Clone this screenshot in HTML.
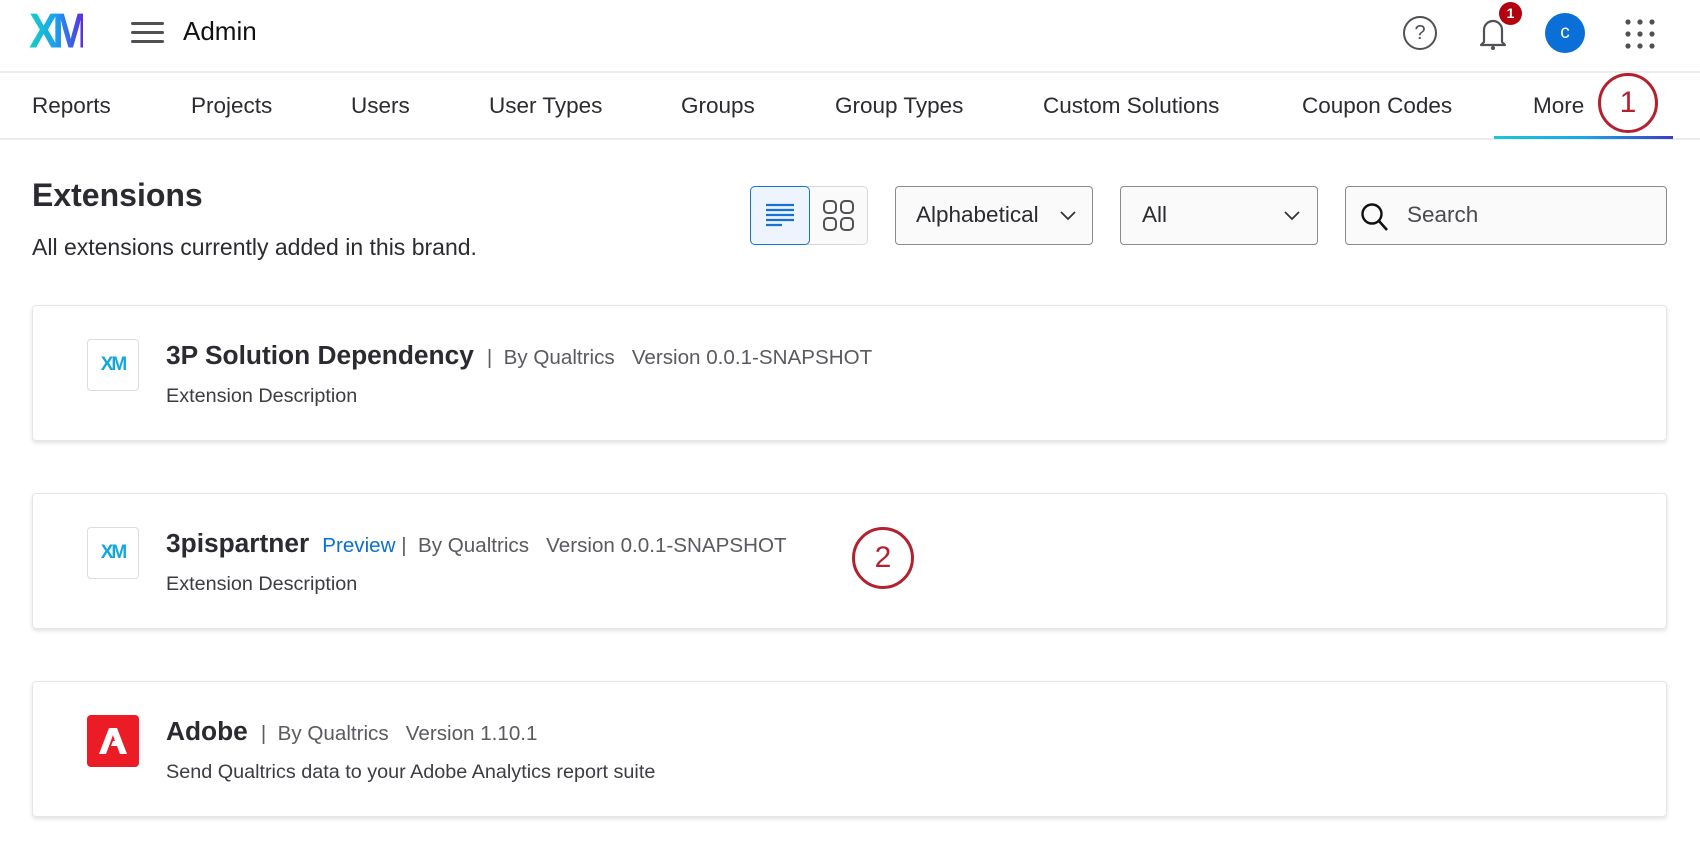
<!DOCTYPE html>
<html><head><meta charset="utf-8"><style>
*{margin:0;padding:0;box-sizing:border-box}
body{width:1700px;height:844px;background:#fff;font-family:"Liberation Sans",Arial,sans-serif;color:#1f1f24;position:relative;overflow:hidden}
.a{position:absolute;white-space:nowrap}
.nav{font-size:22.5px;color:#2b2b30;top:93px}
.card{position:absolute;left:32px;width:1635px;height:136px;background:#fff;border:1px solid #e6e6e8;border-radius:4px;box-shadow:0 2px 4px rgba(0,0,0,.12)}
.logo{position:absolute;left:54px;top:33px;width:52px;height:52px;border:1.5px solid #ddd;border-radius:4px;display:flex;align-items:center;justify-content:center;font-weight:bold;font-size:19px;letter-spacing:-2px;color:#14a6e0}
.t{position:absolute;left:133px;top:34px;font-size:26.3px;font-weight:bold;color:#2a2a30;white-space:nowrap}
.m{font-size:20.6px;font-weight:normal;color:#5a5a60}
.d{position:absolute;left:133px;top:79px;font-size:19.8px;color:#3c3c42;white-space:nowrap}
.box{position:absolute;top:186px;height:59px;border:1.5px solid #8a8a90;border-radius:4px;background:#fafafa;font-size:22.5px;color:#2b2b30}
.num{position:absolute;border:3.5px solid #b5202e;border-radius:50%;color:#b5202e;font-size:30px;display:flex;align-items:center;justify-content:center}
</style></head><body>
<div class="a" style="left:29px;top:4px;font-size:44px;font-weight:bold;letter-spacing:-6px;transform:scaleY(1.12);transform-origin:top left;background:linear-gradient(90deg,#13d3c0,#1a9ff0 50%,#5a2ee0);-webkit-background-clip:text;color:transparent">XM</div>
<div class="a" style="left:131px;top:22px;width:33px;height:3px;background:#505055;box-shadow:0 9px 0 #505055,0 18px 0 #505055;border-radius:2px"></div>
<div class="a" style="left:183px;top:16px;font-size:26px;color:#111">Admin</div>
<div class="a" style="left:1403px;top:16px;width:34px;height:34px;border:2px solid #505055;border-radius:50%;text-align:center;font-size:20px;line-height:30px;color:#505055">?</div>
<svg class="a" style="left:1476px;top:14px" width="34" height="38" viewBox="0 0 34 38"><path d="M8 28V16a9 9 0 0 1 18 0v12l3 3H5z" fill="none" stroke="#505055" stroke-width="2.2" stroke-linejoin="round"/><circle cx="17" cy="34" r="2" fill="#505055"/></svg>
<div class="a" style="left:1499px;top:2px;width:23px;height:23px;border-radius:50%;background:#b3000f;color:#fff;font-size:14px;font-weight:bold;text-align:center;line-height:23px">1</div>
<div class="a" style="left:1545px;top:13px;width:40px;height:40px;border-radius:50%;background:#0a6fd6;color:#fff;font-size:19px;text-align:center;line-height:40px">c</div>
<svg class="a" style="left:1624px;top:18px" width="32" height="32"><g fill="#505055"><circle cx="4" cy="4" r="2.6"/><circle cx="16" cy="4" r="2.6"/><circle cx="28" cy="4" r="2.6"/><circle cx="4" cy="16" r="2.6"/><circle cx="16" cy="16" r="2.6"/><circle cx="28" cy="16" r="2.6"/><circle cx="4" cy="28" r="2.6"/><circle cx="16" cy="28" r="2.6"/><circle cx="28" cy="28" r="2.6"/></g></svg>
<div class="a" style="left:0;top:71px;width:1700px;height:2px;background:#ececee"></div>
<div class="a nav" style="left:32px">Reports</div>
<div class="a nav" style="left:191px">Projects</div>
<div class="a nav" style="left:351px">Users</div>
<div class="a nav" style="left:489px">User Types</div>
<div class="a nav" style="left:681px">Groups</div>
<div class="a nav" style="left:835px">Group Types</div>
<div class="a nav" style="left:1043px">Custom Solutions</div>
<div class="a nav" style="left:1302px">Coupon Codes</div>
<div class="a nav" style="left:1533px">More</div>
<div class="a" style="left:0;top:138px;width:1700px;height:2px;background:#ececee"></div>
<div class="a" style="left:1494px;top:136px;width:179px;height:3px;background:linear-gradient(90deg,#1bc6d6,#18a8e8 50%,#3a3cc8)"></div>
<div class="num" style="left:1598px;top:73px;width:60px;height:60px">1</div>
<div class="a" style="left:32px;top:177px;font-size:32px;font-weight:bold;color:#2a2a30">Extensions</div>
<div class="a" style="left:32px;top:234px;font-size:23px;color:#2b2b30">All extensions currently added in this brand.</div>
<div class="a" style="left:750px;top:186px;width:118px;height:59px;border:1.5px solid #d8d8dc;border-radius:5px;background:#fafafa"></div>
<div class="a" style="left:750px;top:186px;width:60px;height:59px;border:1.5px solid #1a73d9;border-radius:5px;background:#eef4fd"></div>
<svg class="a" style="left:765px;top:203px" width="30" height="26"><g stroke="#1a6fd6" stroke-width="2.2"><path d="M1 2h28M1 7h28M1 12h28M1 17h28M1 22h16"/></g></svg>
<svg class="a" style="left:823px;top:200px" width="32" height="32"><g fill="none" stroke="#505055" stroke-width="2"><rect x="1" y="1" width="12" height="12" rx="4"/><rect x="18" y="1" width="12" height="12" rx="4"/><rect x="1" y="18" width="12" height="12" rx="4"/><rect x="18" y="18" width="12" height="12" rx="4"/></g></svg>
<div class="box" style="left:895px;width:198px"><span class="a" style="left:20px;top:15px">Alphabetical</span><svg class="a" style="left:164px;top:24px" width="16" height="10"><path d="M1 1l7 7 7-7" fill="none" stroke="#333" stroke-width="1.8"/></svg></div>
<div class="box" style="left:1120px;width:198px"><span class="a" style="left:21px;top:15px">All</span><svg class="a" style="left:163px;top:24px" width="16" height="10"><path d="M1 1l7 7 7-7" fill="none" stroke="#333" stroke-width="1.8"/></svg></div>
<div class="box" style="left:1345px;width:322px"><svg class="a" style="left:14px;top:15px" width="30" height="32"><circle cx="12" cy="12" r="9.5" fill="none" stroke="#111" stroke-width="2.4"/><path d="M19 19l8 9" stroke="#111" stroke-width="2.6"/></svg><span class="a" style="left:61px;top:15px;color:#4a4a50">Search</span></div>
<div class="card" style="top:305px"><div class="logo">XM</div><div class="t">3P Solution Dependency <span class="m">&nbsp;|&nbsp; By Qualtrics &nbsp; Version 0.0.1-SNAPSHOT</span></div><div class="d">Extension Description</div></div>
<div class="card" style="top:493px"><div class="logo">XM</div><div class="t">3pispartner <span class="m" style="color:#0a6fd6">&nbsp;Preview</span><span class="m"> | &nbsp;By Qualtrics &nbsp; Version 0.0.1-SNAPSHOT</span></div><div class="d">Extension Description</div></div>
<div class="card" style="top:681px"><div class="logo" style="background:#eb1c26;border-color:#eb1c26"><svg width="30" height="28" viewBox="0 0 30 28"><path d="M11 1h8l10 26h-7l-3-8h-6l2-5h2l-2-6-7 19H1z" fill="#fff"/></svg></div><div class="t">Adobe <span class="m">&nbsp;|&nbsp; By Qualtrics &nbsp; Version 1.10.1</span></div><div class="d">Send Qualtrics data to your Adobe Analytics report suite</div></div>
<div class="num" style="left:852px;top:527px;width:62px;height:62px">2</div>
</body></html>
